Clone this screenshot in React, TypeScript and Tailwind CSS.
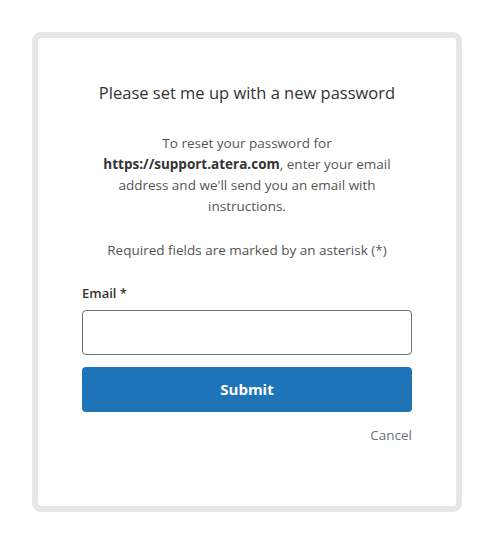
export default function App() {
  return (
    <div className="min-h-screen w-full bg-white pt-8 pl-8" style={{ fontFamily: '"Open Sans", "Noto Sans", sans-serif' }}>
      <div className="w-[430px] h-[480px] rounded-[9px] border-[6px] border-[#e6e6e6] bg-white px-11 pt-[43px]">
        <h1 className="text-center text-[16.5px] leading-6 text-[#333]">Please set me up with a new password</h1>
        <p className="mt-[28px] text-center text-[13.5px] leading-[21px] text-[#555]">
          To reset your password for<br />
          <b className="font-bold text-[#333]">https://support.atera.com</b>, enter your email
          <br />
          address and we'll send you an email with
          <br />
          instructions.
        </p>
        <p className="mt-[23px] text-center text-[13.5px] leading-[21px] text-[#555]">
          Required fields are marked by an asterisk (*)
        </p>
        <form className="mt-[22px] flex flex-col">
          <label className="text-[13px] font-semibold leading-5 text-[#333]">Email *</label>
          <input
            type="email"
            className="mt-[7px] h-[45px] w-full rounded border border-[#6b7280] px-3 text-sm outline-none"
          />
          <button
            type="button"
            className="mt-3 h-[45px] w-full rounded bg-[#1f74b8] text-[15px] font-bold text-white"
          >
            Submit
          </button>
          <div className="mt-[13px] flex justify-end">
            <a className="text-[13.5px] leading-5 text-[#6b7280]">Cancel</a>
          </div>
        </form>
      </div>
    </div>
  );
}
